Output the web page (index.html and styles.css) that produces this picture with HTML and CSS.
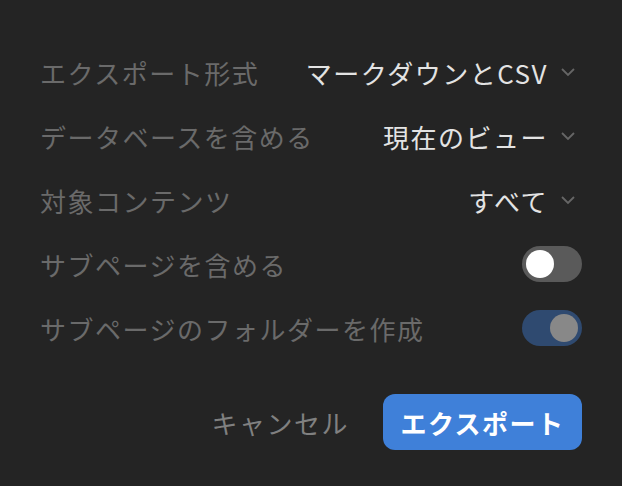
FILE: index.html
```html
<!DOCTYPE html>
<html lang="ja">
<head>
    <meta charset="UTF-8">
    <title>エクスポート</title>
    <link rel="stylesheet" href="styles.css">
</head>
<body>
    <div class="dialog">
        <div class="row">
            <span class="label">エクスポート形式</span>
            <span class="select">マークダウンとCSV
                <svg class="chevron" width="16" height="10" viewBox="0 0 16 10"><path d="M2 2 L8 8 L14 2" fill="none" stroke="#666" stroke-width="1.8"/></svg>
            </span>
        </div>
        <div class="row">
            <span class="label">データベースを含める</span>
            <span class="select">現在のビュー
                <svg class="chevron" width="16" height="10" viewBox="0 0 16 10"><path d="M2 2 L8 8 L14 2" fill="none" stroke="#666" stroke-width="1.8"/></svg>
            </span>
        </div>
        <div class="row">
            <span class="label">対象コンテンツ</span>
            <span class="select">すべて
                <svg class="chevron" width="16" height="10" viewBox="0 0 16 10"><path d="M2 2 L8 8 L14 2" fill="none" stroke="#666" stroke-width="1.8"/></svg>
            </span>
        </div>
        <div class="row">
            <span class="label">サブページを含める</span>
            <span class="toggle"><span class="knob"></span></span>
        </div>
        <div class="row">
            <span class="label">サブページのフォルダーを作成</span>
            <span class="toggle on"><span class="knob"></span></span>
        </div>
        <div class="actions">
            <button type="button" class="cancel">キャンセル</button>
            <button type="button" class="primary">エクスポート</button>
        </div>
    </div>
</body>
</html>
```

FILE: styles.css
```css
body {
    margin: 0;
    background-color: #242424;
    font-family: "Noto Sans CJK JP", "Noto Sans", sans-serif;
    width: 622px;
    height: 486px;
    overflow: hidden;
}

.dialog {
    padding: 40px 40px 0 40px;
}

.row {
    display: flex;
    justify-content: space-between;
    align-items: center;
    height: 64px;
}

.label {
    color: #6a6a6a;
    font-size: 26px;
    letter-spacing: 1.5px;
}

.select {
    display: flex;
    align-items: center;
    gap: 12px;
    color: #e3e3e3;
    font-size: 26px;
    letter-spacing: 1.5px;
}

.chevron {
    margin-right: 6px;
}

.toggle {
    width: 60px;
    height: 36px;
    border-radius: 18px;
    background-color: #5a5a5a;
    display: flex;
    align-items: center;
    padding: 0 4px;
    box-sizing: border-box;
}

.knob {
    width: 28px;
    height: 28px;
    border-radius: 50%;
    background-color: #fff;
}

.toggle.on {
    background-color: #2f4a70;
    justify-content: flex-end;
}

.toggle.on .knob {
    background-color: #888;
}

.actions {
    display: flex;
    justify-content: flex-end;
    align-items: center;
    gap: 34px;
    margin-top: 34px;
}

.actions button {
    font-family: inherit;
    font-size: 26px;
    letter-spacing: 1.5px;
    border: none;
    cursor: pointer;
}

.cancel {
    background: none;
    color: #808080;
    font-weight: 400;
    padding: 0;
}

.primary {
    background-color: #3f80d9;
    color: #fff;
    font-weight: 700;
    height: 56px;
    width: 199px;
    border-radius: 12px;
    padding: 0;
}
```
